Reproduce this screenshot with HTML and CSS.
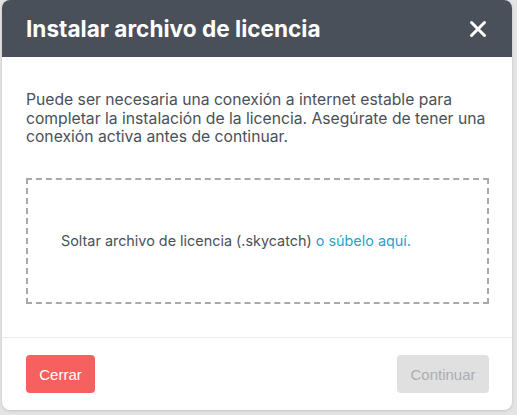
FILE: index.html
```html
<!DOCTYPE html>
<html lang="es">
<head>
<meta charset="utf-8">
<link rel="stylesheet" href="styles.css">
</head>
<body>
<div class="modal">
  <div class="modal-header">
    <h1 class="modal-title">Instalar archivo de licencia</h1>
    <button class="close-btn" aria-label="Cerrar">
      <svg width="18" height="18" viewBox="0 0 18 18"><path d="M2.5 2.5 L15.5 15.5 M15.5 2.5 L2.5 15.5" stroke="#fff" stroke-width="3" stroke-linecap="round"/></svg>
    </button>
  </div>
  <div class="modal-body">
    <p class="intro">Puede ser necesaria una conexión a internet estable para completar la instalación de la licencia. Asegúrate de tener una conexión activa antes de continuar.</p>
    <div class="dropzone">
      <span>Soltar archivo de licencia (.skycatch) <a class="link">o súbelo aquí.</a></span>
    </div>
  </div>
  <div class="modal-footer">
    <button class="btn btn-danger">Cerrar</button>
    <button class="btn btn-disabled">Continuar</button>
  </div>
</div>
</body>
</html>
```
FILE: styles.css
```css
* { box-sizing: border-box; }
html, body { margin: 0; padding: 0; }
body {
  background: #e4e4e4;
  width: 517px;
  height: 415px;
  overflow: hidden;
}
.modal {
  margin-left: 2px;
  width: 510px;
  height: 410px;
  background: #fff;
  border-radius: 8px;
  overflow: hidden;
  display: flex;
  flex-direction: column;
  box-shadow: 0 1px 3px rgba(0,0,0,0.15);
}
.modal-header {
  height: 57px;
  background: #4a5059;
  display: flex;
  align-items: center;
  justify-content: space-between;
  padding: 0 24px 0 24px;
}
.modal-title {
  margin: 0;
  font-family: Inter, "Liberation Sans", sans-serif;
  font-weight: 700;
  font-size: 22.6px;
  color: #fff;
}
.close-btn {
  background: none;
  border: 0;
  padding: 0;
  width: 20px;
  height: 20px;
  display: flex;
  align-items: center;
  justify-content: center;
}
.modal-body {
  flex: 1;
  padding: 34px 23px 0 24px;
}
.intro {
  margin: 0;
  font-family: Inter, "Liberation Sans", sans-serif;
  font-size: 15.7px;
  line-height: 18.5px;
  color: #4a5059;
}
.dropzone {
  margin-top: 31px;
  height: 126px;
  border: 2px dashed #a9a9a9;
  display: flex;
  align-items: center;
  padding-left: 33px;
  font-family: Inter, "Liberation Sans", sans-serif;
  font-size: 14.4px;
  color: #4a5059;
}
.link { color: #2b9fce; cursor: pointer; }
.modal-footer {
  height: 73px;
  border-top: 1px solid #ececec;
  display: flex;
  align-items: center;
  justify-content: space-between;
  padding: 0 23px 0 24px;
}
.btn {
  font-family: "Liberation Sans", Arial, sans-serif;
  font-size: 15px;
  border: 0;
  border-radius: 4px;
  height: 38px;
}
.btn-danger {
  background: #f66160;
  color: #fff;
  width: 69px;
}
.btn-disabled {
  background: #e0e0e0;
  color: #adadad;
  width: 92px;
}
```
